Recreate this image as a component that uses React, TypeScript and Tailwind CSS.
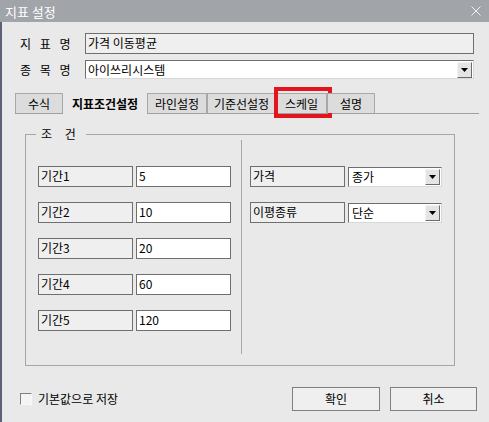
import { ReactNode } from 'react'

const font = { fontFamily: '"Noto Sans CJK KR", "Noto Sans", sans-serif' }

function LabelBox({ children, className = '' }: { children: ReactNode; className?: string }) {
  return (
    <div
      className={`h-[21px] w-[95px] border border-[#6f6f6f] bg-[#efefef] pl-[2px] text-[12px] leading-[17px] text-black ${className}`}
    >
      {children}
    </div>
  )
}

function ValueBox({ children }: { children: ReactNode }) {
  return (
    <div className="h-[21px] w-[95px] border border-[#6f6f6f] bg-white pl-[2px] text-[12px] leading-[17px] text-black">
      {children}
    </div>
  )
}

function Combo({ value }: { value: string }) {
  return (
    <div className="flex h-[20px] w-[94px] items-center border border-[#6f6f6f] border-r-[#d8d8d8] border-b-[#d8d8d8] bg-white">
      <span className="flex-1 pl-[3px] text-[12px] leading-[16px]">{value}</span>
      <DropBtn />
    </div>
  )
}

function DropBtn() {
  return (
    <span className="mr-[1px] flex h-[16px] w-[15px] items-center justify-center border border-[#f4f4f4] border-r-[#6c6c6c] border-b-[#6c6c6c] bg-[#e4e4e4]">
      <svg width="7" height="4" viewBox="0 0 7 4">
        <path d="M0 0h7L3.5 4z" fill="#000" />
      </svg>
    </span>
  )
}

const tabs = ['수식', '지표조건설정', '라인설정', '기준선설정', '스케일', '설명']
const tabWidths = ['w-[48px]', 'w-[84px]', 'w-[60px]', 'w-[69px]', 'w-[51px]', 'w-[48px]']

export default function App() {
  return (
    <div className="h-[422px] w-[489px] overflow-hidden bg-[#e9e9e9] text-black" style={font}>
      {/* title bar */}
      <div className="flex h-[22px] items-center justify-between bg-[#a1a4a9] pl-[5px] pr-[8px]">
        <span className="text-[13px] leading-none text-white">지표 설정</span>
        <svg width="10" height="10" viewBox="0 0 10 10">
          <path d="M0.5 0.5L9.5 9.5M9.5 0.5L0.5 9.5" stroke="#f2f2f2" strokeWidth="1" />
        </svg>
      </div>

      <div className="flex h-[400px] flex-col border-l-2 border-[#5d6178]">
        {/* 지표명 */}
        <div className="mt-[11px] flex items-center">
          <span className="w-[83px] pl-[18px] text-[12px] tracking-[3px]">지 표 명</span>
          <div className="h-[21px] w-[389px] border border-[#6f6f6f] bg-[#efefef] pl-[2px] text-[12px] leading-[17px]">
            가격 이동평균
          </div>
        </div>

        {/* 종목명 */}
        <div className="mt-[6px] flex items-center">
          <span className="w-[83px] pl-[18px] text-[12px] tracking-[3px]">종 목 명</span>
          <div className="flex h-[19px] w-[389px] items-center border border-[#6f6f6f] border-r-[#d8d8d8] border-b-[#d8d8d8] bg-white">
            <span className="flex-1 pl-[2px] text-[12px] leading-[16px]">아이쓰리시스템</span>
            <DropBtn />
          </div>
        </div>

        {/* tabs */}
        <div className="ml-[13px] mt-[15px] flex h-[20px] w-[464px] items-end border-b border-[#a0a0a0]">
          {tabs.map((t, i) => {
            const active = i === 1
            return (
              <div
                key={t}
                className={`relative flex h-[20px] items-center justify-center text-[12px] ${tabWidths[i]} ${
                  active
                    ? 'mb-[-1px] h-[21px] bg-[#e9e9e9] font-bold'
                    : 'border border-b-0 border-[#a8a8a8] bg-[#dcdcdc]'
                }`}
              >
                {t}
                {i === 4 && (
                  <span className="absolute left-[-3px] top-[-7px] h-[31px] w-[58px] border-[4px] border-[#e3141e]" />
                )}
              </div>
            )
          })}
        </div>

        {/* 조건 group */}
        <fieldset className="ml-[23px] mt-[14px] h-[238px] w-[430px] border border-[#a6a6a6] px-0">
          <legend className="ml-[10px] px-[5px] text-[12px] leading-[12px] tracking-[5px]">조 건</legend>
          <div className="mt-[26px] flex">
            <div className="flex w-[215px] flex-col gap-[15px] pl-[12px]">
              {[
                ['기간1', '5'],
                ['기간2', '10'],
                ['기간3', '20'],
                ['기간4', '60'],
                ['기간5', '120'],
              ].map(([l, v]) => (
                <div key={l} className="flex gap-[3px]">
                  <LabelBox>{l}</LabelBox>
                  <ValueBox>{v}</ValueBox>
                </div>
              ))}
            </div>
            <div className="-mt-[26px] h-[214px] w-[1px] bg-[#a8a8a8]" />
            <div className="flex flex-col gap-[15px] pl-[8px]">
              <div className="flex items-center gap-[3px]">
                <LabelBox>가격</LabelBox>
                <Combo value="종가" />
              </div>
              <div className="flex items-center gap-[3px]">
                <LabelBox>이평종류</LabelBox>
                <Combo value="단순" />
              </div>
            </div>
          </div>
        </fieldset>

        {/* bottom */}
        <div className="mt-[21px] flex items-center">
          <div className="ml-[18px] flex items-center gap-[6px]">
            <span className="h-[12px] w-[12px] border border-[#f8f8f8] border-l-[#808080] border-t-[#808080] bg-[#f4f4f4]" />
            <span className="text-[12px]">기본값으로 저장</span>
          </div>
          <button className="ml-auto h-[24px] w-[88px] border border-[#7f7f7f] bg-[#efefef] text-[12px]">확인</button>
          <button className="ml-[10px] mr-[12px] h-[24px] w-[87px] border border-[#7f7f7f] bg-[#efefef] text-[12px]">
            취소
          </button>
        </div>
      </div>
    </div>
  )
}
